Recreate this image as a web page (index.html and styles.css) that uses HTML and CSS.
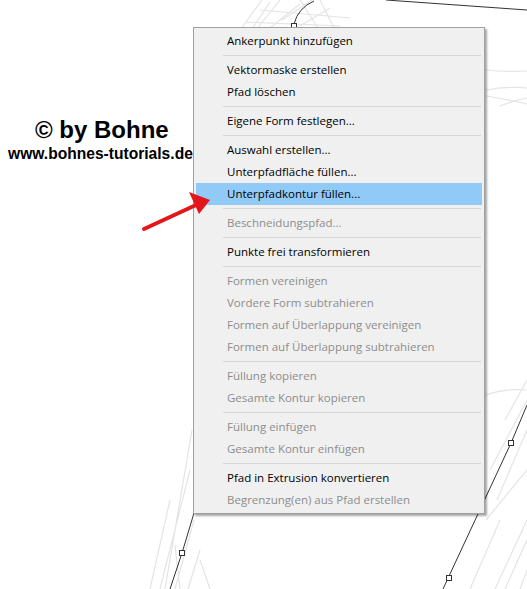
FILE: index.html
```html
<!DOCTYPE html>
<html>
<head>
<meta charset="utf-8">
<link rel="stylesheet" href="styles.css">
</head>
<body>
<div class="stage">
  <svg class="art" width="527" height="589" viewBox="0 0 527 589">
    <g class="sketch">
      <path d="M240 30 L262 0 M250 32 L270 2 M256 30 L280 0 M270 28 L300 4 M282 20 L312 0 M300 26 L330 8 M246 22 L340 26 M260 10 L350 18 M320 0 L335 30 M300 0 L318 28"/>
      <path d="M486 70 Q505 72 527 71 M486 90 Q510 86 527 88 M486 96 Q510 100 527 104 M500 106 Q515 100 527 98"/>
      <path d="M486 395 Q505 388 527 390 M505 420 L527 380 M490 470 L527 400 M497 500 L527 430 M495 589 L527 520 M505 589 L527 540 M520 589 L527 570 M486 520 L527 470 M470 589 L500 520"/>
      <path d="M150 589 L170 500 M160 589 L190 470 M175 589 L194 520 M180 589 L175 545 M165 589 L192 430 M188 589 L200 550 M200 560 L210 589"/>
    </g>
    <g class="path-line">
      <path d="M386 0 L527 10"/>
      <path d="M314 1 Q298 8 294 24"/>
      <path d="M527 405 L511 443 L443 589"/>
      <path d="M194 513 L182 553 L170 589"/>
    </g>
    <g class="anchors">
      <rect x="291.5" y="23.5" width="5" height="5"/>
      <rect x="508.5" y="440.5" width="5" height="5"/>
      <rect x="446.5" y="575.5" width="5" height="5"/>
      <rect x="179.5" y="550.5" width="5" height="5"/>
    </g>
  </svg>

  <div class="watermark">
    <div class="wm-title">© by Bohne</div>
    <div class="wm-url">www.bohnes-tutorials.de</div>
  </div>

  <svg class="arrow" width="527" height="589" viewBox="0 0 527 589">
    <line x1="144" y1="229" x2="196" y2="205" class="arrow-line"/>
    <polygon points="210,200 189,192 199,214" class="arrow-head"/>
  </svg>

  <div class="menu">
    <div class="item">Ankerpunkt hinzufügen</div>
    <div class="sep"></div>
    <div class="item">Vektormaske erstellen</div>
    <div class="item">Pfad löschen</div>
    <div class="sep"></div>
    <div class="item">Eigene Form festlegen...</div>
    <div class="sep"></div>
    <div class="item">Auswahl erstellen...</div>
    <div class="item">Unterpfadfläche füllen...</div>
    <div class="item active">Unterpfadkontur füllen...</div>
    <div class="sep"></div>
    <div class="item disabled">Beschneidungspfad...</div>
    <div class="sep"></div>
    <div class="item">Punkte frei transformieren</div>
    <div class="sep"></div>
    <div class="item disabled">Formen vereinigen</div>
    <div class="item disabled">Vordere Form subtrahieren</div>
    <div class="item disabled">Formen auf Überlappung vereinigen</div>
    <div class="item disabled">Formen auf Überlappung subtrahieren</div>
    <div class="sep"></div>
    <div class="item disabled">Füllung kopieren</div>
    <div class="item disabled">Gesamte Kontur kopieren</div>
    <div class="sep"></div>
    <div class="item disabled">Füllung einfügen</div>
    <div class="item disabled">Gesamte Kontur einfügen</div>
    <div class="sep"></div>
    <div class="item">Pfad in Extrusion konvertieren</div>
    <div class="item disabled">Begrenzung(en) aus Pfad erstellen</div>
  </div>
</div>
</body>
</html>
```

FILE: styles.css
```css
html, body {
  margin: 0;
  padding: 0;
  background: #ffffff;
}
.stage {
  position: relative;
  width: 527px;
  height: 589px;
  overflow: hidden;
  background: #ffffff;
}
.art, .arrow {
  position: absolute;
  left: 0;
  top: 0;
}
.arrow {
  z-index: 3;
}
.sketch path {
  fill: none;
  stroke: #e4e4e4;
  stroke-width: 1.2;
}
.path-line path {
  fill: none;
  stroke: #333333;
  stroke-width: 1;
}
.anchors rect {
  fill: #ffffff;
  stroke: #333333;
  stroke-width: 1;
}
.arrow-line {
  stroke: #e3161b;
  stroke-width: 4;
  stroke-linecap: round;
}
.arrow-head {
  fill: #e3161b;
}
.watermark {
  position: absolute;
  left: 8px;
  top: 116px;
  width: 200px;
  font-family: "Liberation Sans", Arial, sans-serif;
  font-weight: bold;
  color: #000;
}
.wm-title {
  font-size: 24px;
  line-height: 28px;
  padding-left: 27px;
}
.wm-url {
  font-size: 15.6px;
  line-height: 19px;
  white-space: nowrap;
}
.menu {
  position: absolute;
  left: 193px;
  top: 27px;
  width: 290px;
  padding: 2px 0;
  background: #f0f0f0;
  border: 1px solid #a0a0a0;
  box-shadow: 2px 2px 2px rgba(0,0,0,0.35);
  font-family: "Open Sans", "Noto Sans", sans-serif;
  font-size: 11.5px;
  color: #000;
  z-index: 2;
}
.item {
  height: 22px;
  line-height: 22px;
  padding-left: 31px;
  margin: 0 2px;
  white-space: nowrap;
}
.item.active {
  background: #91c9f7;
}
.item.disabled {
  color: #8d8d8d;
}
.sep {
  height: 1px;
  margin: 3px 3px 3px 29px;
  background: #d7d7d7;
}
```
